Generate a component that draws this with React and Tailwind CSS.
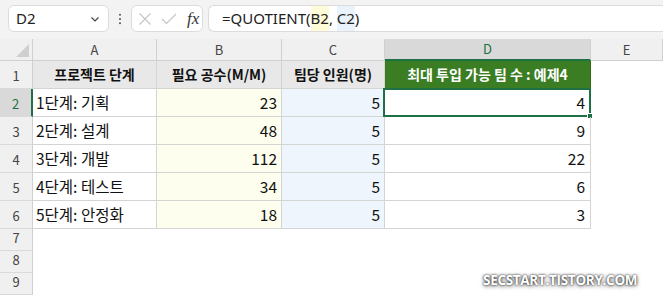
import React from "react"

const FONT = "font-['Noto_Sans_CJK_KR','Noto_Sans',sans-serif]"
const GRID = "grid grid-cols-[33px_124px_125px_103px_206px_72px]"
const LINE = "border-[#d4d4d4]"

const rows = [
  ["1단계: 기획", 23, 5, 4],
  ["2단계: 설계", 48, 5, 9],
  ["3단계: 개발", 112, 5, 22],
  ["4단계: 테스트", 34, 5, 6],
  ["5단계: 안정화", 18, 5, 3],
]

function FormulaBar() {
  return (
    <div className="flex h-[39px] items-start bg-[#f3f3f3] pl-2 pt-[5px]">
      <div className="flex h-[27px] w-[101px] items-center justify-between rounded-md border border-[#dcdcdc] bg-white pl-[7px] pr-[7px]">
        <span className="font-['Noto_Sans',sans-serif] text-[15px] text-[#222]">D2</span>
        <svg viewBox="0 0 12 12" className="h-3 w-3" fill="none" stroke="#444" strokeWidth="1.2">
          <path d="M2.5 4.5 6 8l3.5-3.5" />
        </svg>
      </div>
      <div className="flex h-[27px] w-[22px] items-center justify-center">
        <svg viewBox="0 0 4 14" className="h-[12px] w-[4px]" fill="#555">
          <circle cx="2" cy="2" r="1.2" />
          <circle cx="2" cy="7" r="1.2" />
          <circle cx="2" cy="12" r="1.2" />
        </svg>
      </div>
      <div className="flex h-[27px] w-[72px] items-center rounded-md border border-[#dcdcdc] bg-white pl-[6px]">
        <svg viewBox="0 0 14 14" className="h-[14px] w-[14px]" fill="none" stroke="#c4c4c4" strokeWidth="1.1">
          <path d="M1.5 1.5l11 11M12.5 1.5l-11 11" />
        </svg>
        <svg viewBox="0 0 16 12" className="ml-[9px] h-[12px] w-[16px]" fill="none" stroke="#c4c4c4" strokeWidth="1.1">
          <path d="M1 6l4.5 4.5L15 1" />
        </svg>
        <span className="ml-[10px] font-['Liberation_Serif',serif] text-[17px] italic leading-none text-[#333]">fx</span>
      </div>
      <div className="ml-[5px] flex h-[27px] flex-1 items-stretch rounded-l-md border border-r-0 border-[#dcdcdc] bg-white pl-[13px] font-['Noto_Sans',sans-serif] text-[15px] text-[#222]">
        <span className="flex items-center">=QUOTIENT(</span>
        <span className="flex items-center bg-[#fefbd8]">B2</span>
        <span className="flex items-center whitespace-pre">, </span>
        <span className="flex items-center bg-[#eaf3fc]">C2</span>
        <span className="flex items-center">)</span>
      </div>
    </div>
  )
}

function ColHeader() {
  const base = "flex items-center justify-center border-r border-b border-[#d0d0d0] text-[13px]"
  return (
    <div className={`${GRID} h-[22px] bg-[#f0f0f0]`}>
      <div className={`${base} justify-end items-end pb-[3px] pr-[3px]`}>
        <svg viewBox="0 0 13 13" className="h-[13px] w-[13px]">
          <path d="M13 0V13H0Z" fill="#cfcfcf" />
        </svg>
      </div>
      <div className={`${base} text-[#444]`}>A</div>
      <div className={`${base} text-[#444]`}>B</div>
      <div className={`${base} text-[#444]`}>C</div>
      <div className="flex items-center justify-center border-r border-b-2 border-r-[#d0d0d0] border-b-[#1e7145] bg-[#d9d9d9] text-[13px] text-[#1e7145]">D</div>
      <div className={`${base} text-[#444]`}>E</div>
    </div>
  )
}

function RowHead({ n, active, h }) {
  return (
    <div
      className={`flex items-end justify-center pb-[3px] border-b border-[#dadada] text-[13px] ${h} ${
        active ? "border-r-2 border-r-[#1e7145] bg-[#d9d9d9] text-[#1e7145]" : "border-r border-r-[#d0d0d0] bg-[#f0f0f0] text-[#444]"
      }`}
    >
      {n}
    </div>
  )
}

export default function App() {
  return (
    <div className={`relative h-[298px] w-[663px] overflow-hidden bg-white ${FONT}`}>
      <FormulaBar />
      <ColHeader />

      <div className={`${GRID} h-[28px]`}>
        <RowHead n={1} h="h-[28px]" />
        <div className={`flex items-center justify-center border-r border-b ${LINE} bg-[#e8e8e8] text-[14px] font-bold text-[#111]`}>프로젝트 단계</div>
        <div className={`flex items-center justify-center border-r border-b ${LINE} bg-[#e8e8e8] text-[14px] font-bold text-[#111]`}>필요 공수(M/M)</div>
        <div className={`flex items-center justify-center border-r border-b ${LINE} bg-[#e8e8e8] text-[14px] font-bold text-[#111]`}>팀당 인원(명)</div>
        <div className="flex items-center justify-center border-r border-b border-[#2f6a1b] bg-[#3b7d23] text-[14px] font-bold text-white">최대 투입 가능 팀 수 : 예제4</div>
        <div />
      </div>

      {rows.map(([stage, need, per, teams], i) => (
        <div key={stage} className={`${GRID} h-[28px]`}>
          <RowHead n={i + 2} active={i === 0} h="h-[28px]" />
          <div className={`flex items-center border-r border-b ${LINE} pl-[3px] text-[15.5px] text-[#111]`}>{stage}</div>
          <div className={`flex items-center justify-end border-r border-b ${LINE} bg-[#fefeee] pr-[4px] text-[15.5px] text-[#111]`}>{need}</div>
          <div className={`flex items-center justify-end border-r border-b ${LINE} bg-[#eef5fd] pr-[4px] text-[15.5px] text-[#111]`}>{per}</div>
          <div className={`relative flex items-center justify-end border-r border-b ${LINE} pr-[5px] text-[15.5px] text-[#111]`}>
            {teams}
            {i === 0 && (
              <div className="absolute -left-[2px] -top-[1px] bottom-[-1px] right-[-1px] border-2 border-[#1e7145]">
                <div className="absolute -bottom-[4px] -right-[4px] h-[6px] w-[6px] border border-white bg-[#1e7145]" />
              </div>
            )}
          </div>
          <div />
        </div>
      ))}

      {[7, 8, 9].map((n) => (
        <div key={n} className={`${GRID} h-[22px]`}>
          <RowHead n={n} h="h-[22px]" />
        </div>
      ))}

      <div className="absolute left-[483px] top-[270px] font-['Open_Sans',sans-serif] text-[13.5px] font-bold tracking-[-0.3px] text-white [text-shadow:0_0_2px_rgba(0,0,0,0.9),0_1px_4px_rgba(0,0,0,0.7)]">
        SECSTART.TISTORY.COM
      </div>
    </div>
  )
}
